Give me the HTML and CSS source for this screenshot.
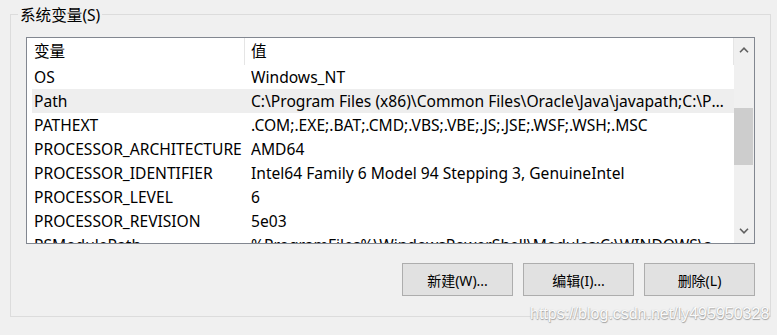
FILE: index.html
```html
<!DOCTYPE html>
<html lang="zh-CN">
<head>
  <meta charset="UTF-8">
  <title>系统变量</title>
  <link rel="stylesheet" href="styles.css">
</head>
<body>

<div class="group">
  <div class="group-title">系统变量(S)</div>

  <div class="listbox">
    <div class="list">
      <div class="list-header">
        <div class="col-name">变量</div>
        <div class="col-value">值</div>
      </div>
      <div class="row"><div class="cell">OS</div><div class="cell">Windows_NT</div></div>
      <div class="row hover"><div class="cell">Path</div><div class="cell">C:\Program Files (x86)\Common Files\Oracle\Java\javapath;C:\Program Files\Java\jdk1.8.0_201\bin</div></div>
      <div class="row"><div class="cell">PATHEXT</div><div class="cell">.COM;.EXE;.BAT;.CMD;.VBS;.VBE;.JS;.JSE;.WSF;.WSH;.MSC</div></div>
      <div class="row"><div class="cell">PROCESSOR_ARCHITECTURE</div><div class="cell">AMD64</div></div>
      <div class="row"><div class="cell">PROCESSOR_IDENTIFIER</div><div class="cell">Intel64 Family 6 Model 94 Stepping 3, GenuineIntel</div></div>
      <div class="row"><div class="cell">PROCESSOR_LEVEL</div><div class="cell">6</div></div>
      <div class="row"><div class="cell">PROCESSOR_REVISION</div><div class="cell">5e03</div></div>
      <div class="row"><div class="cell">PSModulePath</div><div class="cell">%ProgramFiles%\WindowsPowerShell\Modules;C:\WINDOWS\system32\WindowsPowerShell\v1.0\Modules</div></div>
    </div>

    <div class="scrollbar">
      <div class="arrow">
        <svg width="10" height="6" viewBox="0 0 10 6"><path d="M1 5.2 L5 1.2 L9 5.2" fill="none" stroke="#606060" stroke-width="1.6"/></svg>
      </div>
      <div class="track"><div class="thumb"></div></div>
      <div class="arrow">
        <svg width="10" height="6" viewBox="0 0 10 6"><path d="M1 0.8 L5 4.8 L9 0.8" fill="none" stroke="#606060" stroke-width="1.6"/></svg>
      </div>
    </div>
  </div>

  <div class="buttons">
    <button class="btn">新建(W)...</button>
    <button class="btn">编辑(I)...</button>
    <button class="btn">删除(L)</button>
  </div>
</div>

<div class="watermark">https://blog.csdn.net/ly495950328</div>

</body>
</html>
```

FILE: styles.css
```css
body {
  margin: 0;
  padding: 14px 0 0 10px;
  background: #f0f0f0;
  font-family: "Noto Sans", "Noto Sans CJK SC", sans-serif;
  font-size: 15.6px;
  color: #000;
}
.group {
  box-sizing: border-box;
  width: 761px;
  height: 303px;
  border: 1px solid #dcdcdc;
  padding: 0 15px 19px 15px;
}
.group-title {
  width: max-content;
  margin: -10px 0 0 -8px;
  padding: 0 2px;
  height: 20px;
  line-height: 20px;
  background: #f0f0f0;
}
.listbox {
  display: flex;
  margin-top: 12px;
  height: 207px;
  border: 1px solid #828790;
  background: #fff;
  box-sizing: border-box;
}
.list {
  flex: 1;
  overflow: hidden;
  padding-left: 5px;
  min-width: 0;
}
.list-header {
  display: grid;
  grid-template-columns: 212px 1fr;
  height: 27px;
  align-items: center;
}
.list-header > div {
  padding-left: 2px;
  line-height: 27px;
}
.col-value {
  border-left: 1px solid #e5e5e5;
  padding-left: 6px !important;
  border-right: 1px solid #e5e5e5;
  height: 27px;
}
.row {
  display: grid;
  grid-template-columns: 217px 1fr;
  height: 24px;
  line-height: 24px;
  padding-left: 2px;
}
.row.hover {
  background: #eeeeee;
}
.cell {
  white-space: nowrap;
  overflow: hidden;
  text-overflow: ellipsis;
  padding-right: 4px;
}
.scrollbar {
  width: 20px;
  background: #f0f0f0;
  display: flex;
  flex-direction: column;
}
.arrow {
  height: 24px;
  display: flex;
  align-items: center;
  justify-content: center;
}
.track {
  flex: 1;
  padding-top: 46px;
}
.thumb {
  height: 57px;
  background: #cdcdcd;
  margin-right: 1px;
}
.buttons {
  display: flex;
  justify-content: flex-end;
  gap: 10px;
  margin-top: 19px;
}
.btn {
  width: 111px;
  height: 33px;
  background: #e1e1e1;
  border: 1px solid #adadad;
  font-family: "Noto Sans", "Noto Sans CJK SC", sans-serif;
  font-size: 14px;
  color: #000;
  padding: 0;
}
.watermark {
  position: absolute;
  left: 530px;
  top: 305px;
  font-family: "Liberation Sans", Arial, sans-serif;
  font-size: 16px;
  color: rgba(255, 255, 255, 0.95);
  text-shadow: 0.5px 0.5px 1px #a0a0a0, -0.5px -0.5px 1px #c0c0c0;
}
```
